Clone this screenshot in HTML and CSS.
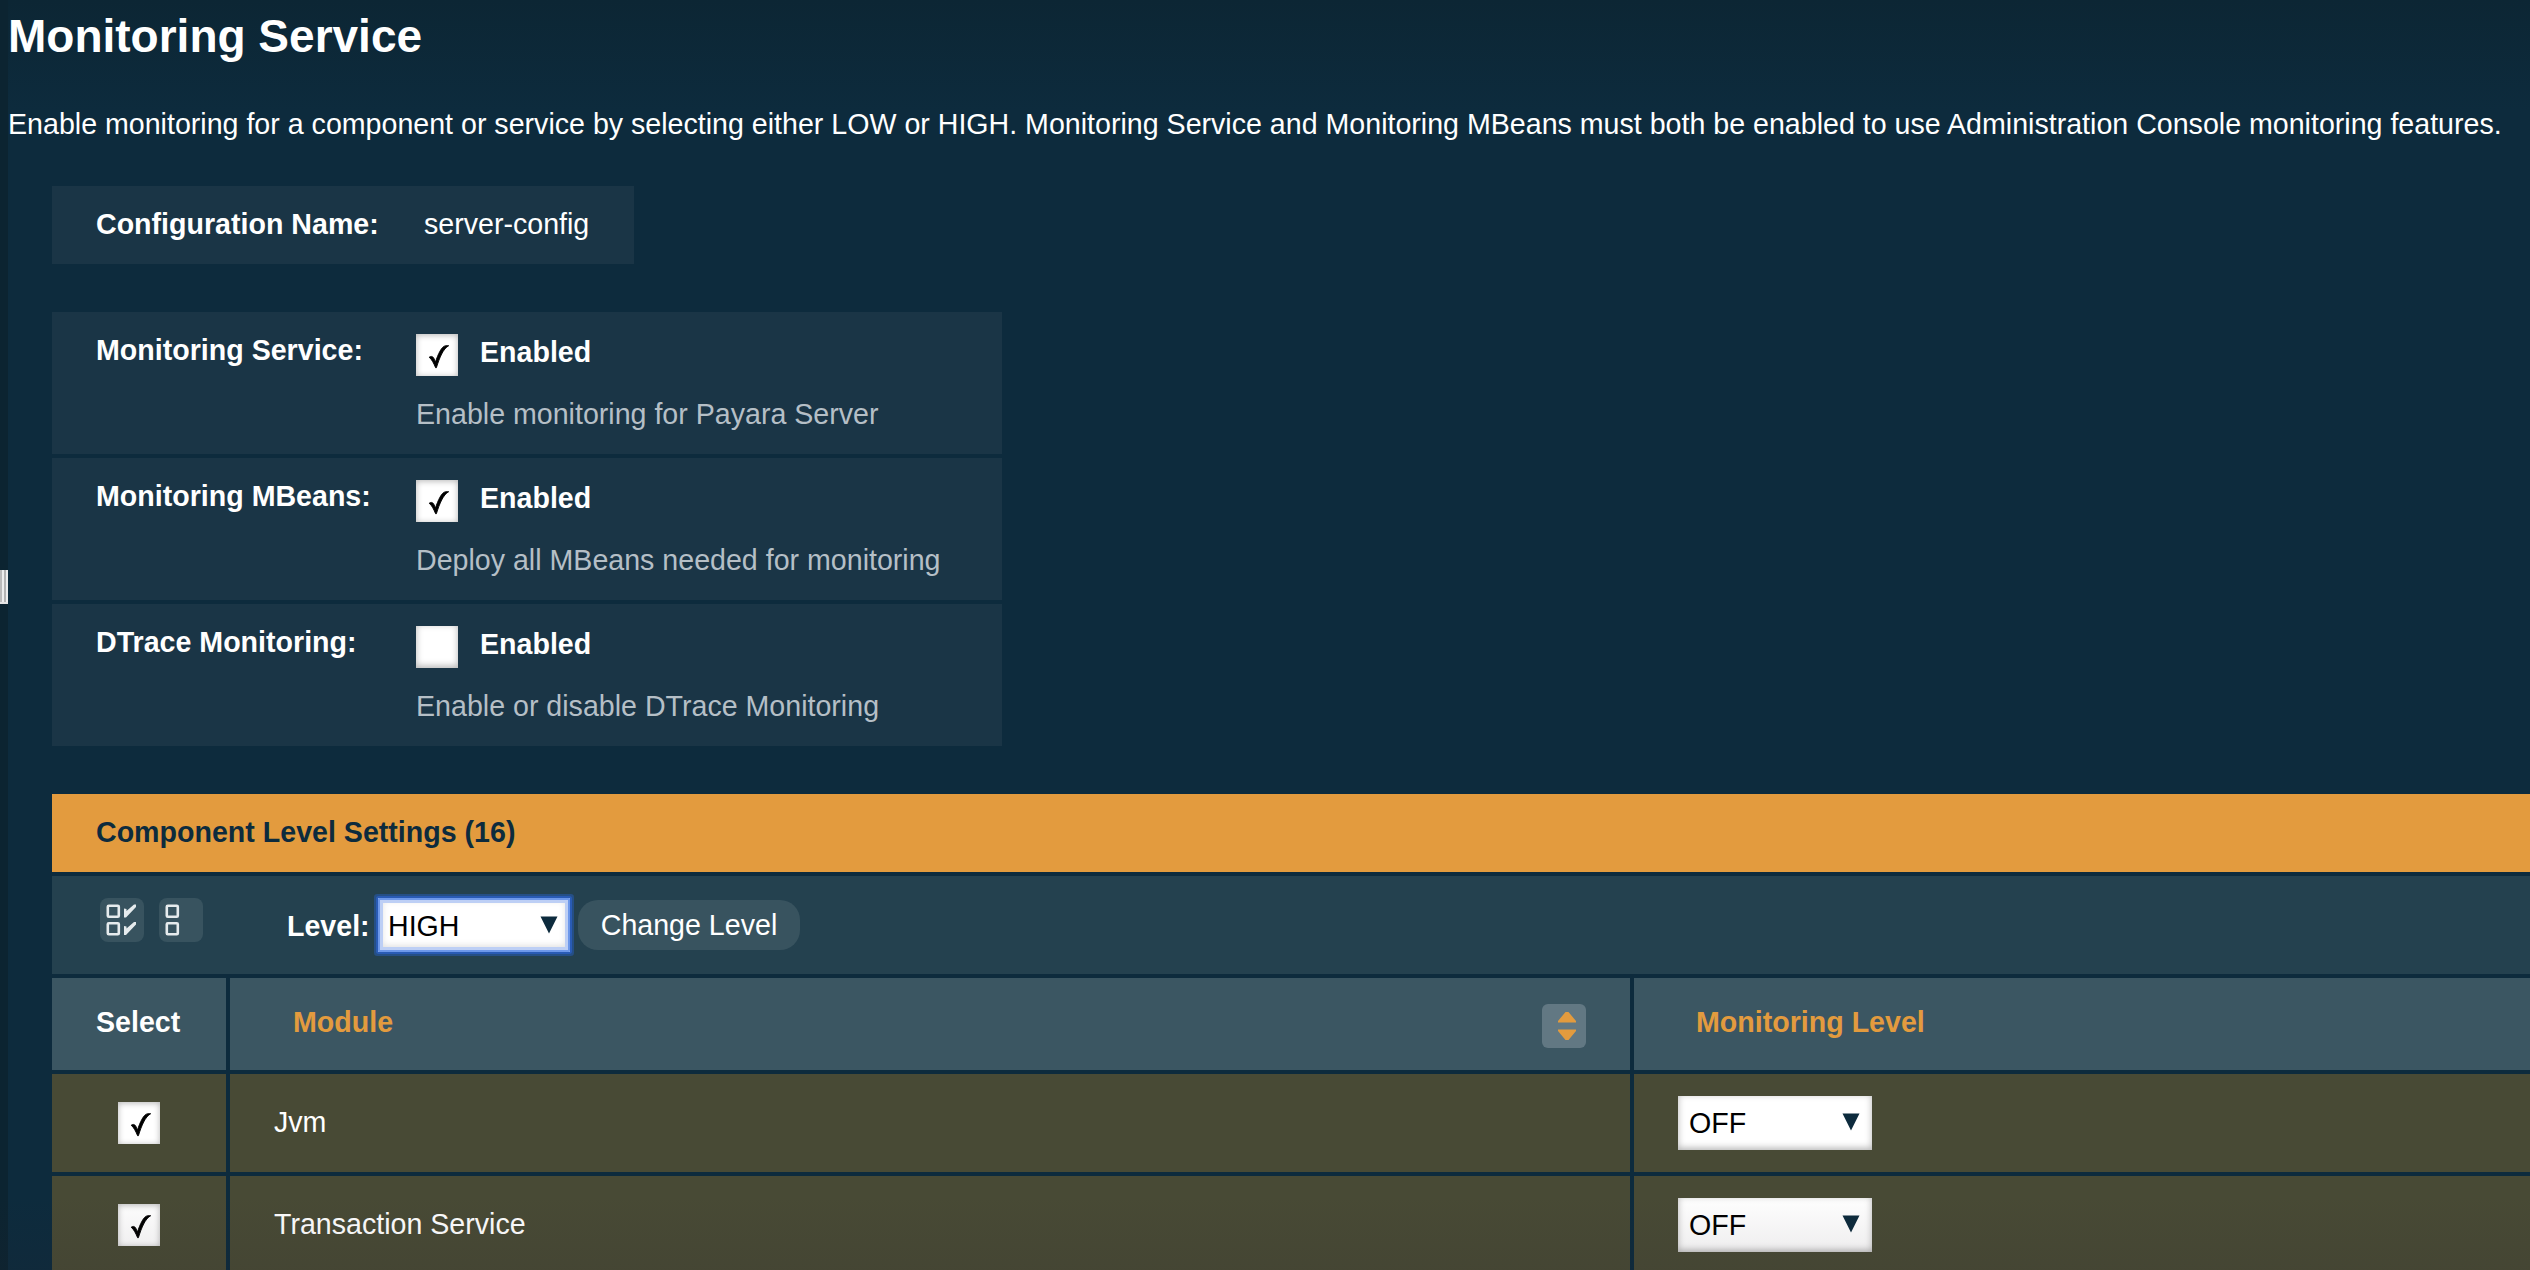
FILE: index.html
```html
<!DOCTYPE html>
<html lang="en">
<head>
<meta charset="utf-8">
<title>Monitoring Service</title>
<link rel="stylesheet" href="styles.css">
</head>
<body>
<svg class="defs" width="0" height="0">
  <symbol id="check" viewBox="0 0 42 42"><path stroke="#000" stroke-width="0.900" d="M13.200 23.200c2-1.500 4.200-1 5.400 2.800l.8 2.200C22 20.500 25.500 11.900 30 11.700h2.700c-5.600 3.200-9 11.500-12.300 22h-.8c-2-4.600-3.400-7.800-6.400-10.500z"/></symbol>
  <symbol id="arrow" viewBox="0 0 18 18"><path d="M.5 0.500h17l-8.500 17z"/></symbol>
</svg>
<div class="page">
  <div class="splitter"><div class="handle"></div></div>
  <main class="content">
    <h1 class="title">Monitoring Service</h1>
    <p class="intro">Enable monitoring for a component or service by selecting either LOW or HIGH. Monitoring Service and Monitoring MBeans must both be enabled to use Administration Console monitoring features.</p>

    <section class="config">
      <span class="config-label">Configuration Name:</span>
      <span>server-config</span>
    </section>

    <section class="properties">
      <div class="property">
        <span class="property-label">Monitoring Service:</span>
        <div>
          <div class="option"><span class="checkbox"><svg class="mark"><use href="#check"/></svg></span><span class="option-text">Enabled</span></div>
          <p class="help">Enable monitoring for Payara Server</p>
        </div>
      </div>
      <div class="property">
        <span class="property-label">Monitoring MBeans:</span>
        <div>
          <div class="option"><span class="checkbox"><svg class="mark"><use href="#check"/></svg></span><span class="option-text">Enabled</span></div>
          <p class="help">Deploy all MBeans needed for monitoring</p>
        </div>
      </div>
      <div class="property">
        <span class="property-label">DTrace Monitoring:</span>
        <div>
          <div class="option"><span class="checkbox checkbox-off"></span><span class="option-text">Enabled</span></div>
          <p class="help">Enable or disable DTrace Monitoring</p>
        </div>
      </div>
    </section>

    <section class="levels">
      <h2 class="levels-title">Component Level Settings (16)</h2>
      <div class="toolbar">
        <div class="icon-button">
          <svg class="glyph" viewBox="0 0 44 44"><g fill="none" stroke="#e6ebed" stroke-width="2.600"><rect x="7.800" y="7.800" width="11" height="11" rx="1"/><rect x="7.800" y="25.200" width="11" height="11" rx="1"/></g><path fill="#e6ebed" d="M24 10.500l2.500 0.500v2L34 6.500h2v2.500L26 19.500h-2zM24 28l2.500 0.500v2L34 24h2v2.500L26 37h-2z"/></svg>
        </div>
        <div class="icon-button">
          <svg class="glyph" viewBox="0 0 44 44"><g fill="none" stroke="#e6ebed" stroke-width="2.600"><rect x="7.800" y="7.800" width="11" height="11" rx="1"/><rect x="7.800" y="25.200" width="11" height="11" rx="1"/></g></svg>
        </div>
        <span class="level-label">Level:</span>
        <div class="select select-focus"><span>HIGH</span><svg class="arrow"><use href="#arrow"/></svg></div>
        <button class="button">Change Level</button>
      </div>
      <div class="row row-head">
        <div class="cell cell-select">Select</div>
        <div class="cell cell-module"><span>Module</span>
          <span class="sort"><svg class="glyph" viewBox="0 0 44 44"><path fill="#e39b3e" d="M23.500 8h3L34 17v1.500H16V17zM16 25.500h18V27l-7.500 9h-3L16 27z"/></svg></span>
        </div>
        <div class="cell cell-level">Monitoring Level</div>
      </div>
      <div class="row">
        <div class="cell cell-select"><span class="checkbox"><svg class="mark"><use href="#check"/></svg></span></div>
        <div class="cell cell-module">Jvm</div>
        <div class="cell cell-level"><div class="select"><span>OFF</span><svg class="arrow"><use href="#arrow"/></svg></div></div>
      </div>
      <div class="row">
        <div class="cell cell-select"><span class="checkbox"><svg class="mark"><use href="#check"/></svg></span></div>
        <div class="cell cell-module">Transaction Service</div>
        <div class="cell cell-level"><div class="select"><span>OFF</span><svg class="arrow"><use href="#arrow"/></svg></div></div>
      </div>
    </section>
  </main>
</div>
</body>
</html>
```
FILE: styles.css
```css
* {
  box-sizing: border-box;
}

body {
  margin: 0;
  overflow: hidden;
  background: #0d2b3d;
  color: #fff;
  font: 28.600px/32px "Liberation Sans", Arial, sans-serif;
}

h1, h2, p {
  margin: 0;
}

.defs {
  display: block;
}

.page {
  position: relative;
  display: flex;
  height: 1270px;
  overflow: hidden;
  background: linear-gradient(#0c2634, #0d2b3d 110px);
}

/* soft shade along the bottom edge */
.page::after {
  content: "";
  position: absolute;
  inset: auto 0 0;
  height: 75px;
  background: linear-gradient(transparent, rgba(40, 30, 40, 0.1));
  pointer-events: none;
}

.splitter {
  display: flex;
  align-items: center;
  flex: 0 0 8px;
  background: #0c2431;
  padding-bottom: 96px;
}

.handle {
  width: 8px;
  height: 34px;
  border-bottom: 2px solid #e4e4e4;
  background: linear-gradient(90deg, #bbb 2px, #eee 2px, #eee 4px, #b4b4b4 4px, #b4b4b4 6px, #eee 6px);
}

.content {
  flex: 1;
  min-width: 0;
}

.title {
  height: 108px;
  padding-top: 8px;
  font-size: 46px;
  line-height: 56px;
}

.intro {
  height: 78px;
  white-space: nowrap;
}

.config {
  display: flex;
  width: 582px;
  height: 78px;
  margin: 0 0 48px 44px;
  padding: 22px 44px;
  background: #1a3546;
}

.config-label {
  width: 328px;
  font-weight: bold;
}

.properties {
  display: grid;
  gap: 4px;
  width: 950px;
  margin: 0 0 48px 44px;
}

.property {
  display: flex;
  height: 142px;
  padding: 22px 0 0 44px;
  background: #1a3546;
}

.property-label {
  width: 320px;
  font-weight: bold;
}

.option {
  display: flex;
  gap: 22px;
}

.option-text {
  padding-top: 2px;
  font-weight: bold;
}

.help {
  margin-top: 22px;
  color: #b5bfc6;
}

.checkbox {
  flex: none;
  width: 42px;
  height: 42px;
  background: #fff;
  box-shadow: inset 0 1px 6px rgba(0, 0, 0, 0.3);
}

.checkbox-off {
  box-shadow: inset 0 -2px 7px rgba(0, 0, 0, 0.3);
}

.mark {
  display: block;
  width: 42px;
  height: 42px;
}

.levels {
  display: grid;
  gap: 4px;
  margin-left: 44px;
}

.levels-title {
  height: 78px;
  padding: 22px 44px;
  background: #e39b3e;
  color: #0d2b3d;
  font-size: inherit;
}

.toolbar {
  display: flex;
  height: 98px;
  padding: 22px 0 0 48px;
  background: #24414f;
}

.icon-button {
  width: 44px;
  height: 44px;
  margin-right: 15px;
  border-radius: 8px;
  background: #38535f;
}

.glyph {
  display: block;
  width: 44px;
  height: 44px;
}

.level-label {
  width: 91px;
  margin-left: 69px;
  padding-top: 12px;
  font-weight: bold;
}

.select {
  display: flex;
  justify-content: space-between;
  width: 194px;
  height: 54px;
  padding: 11px 12px 0 11px;
  background: #fff;
  box-shadow: inset 0 -2px 7px rgba(0, 0, 0, 0.3);
  color: #000;
}

.select-focus {
  width: 192px;
  padding: 12px 12px 0 10px;
  box-shadow: inset 0 0 0 2px #6d98ea, inset 0 0 0 5px #bdcff5, inset 0 -2px 7px 4px rgba(0, 0, 0, 0.14), 0 0 0 2px #295bb5, 0 0 0 4px #254f86;
  border-radius: 1px;
}

.arrow {
  width: 18px;
  height: 18px;
  margin-top: 6px;
  fill: #0d2b3d;
}

.button {
  width: 222px;
  height: 50px;
  margin: 2px 0 0 8px;
  padding: 0;
  border: 0;
  border-radius: 20px;
  background: #38535f;
  color: #fff;
  font: inherit;
}

.row {
  display: grid;
  grid-template-columns: 174px 1400px 1fr;
  gap: 4px;
  height: 98px;
}

.cell {
  padding: 22px 44px 0;
  background: #484a35;
}

.cell-select {
  padding: 28px 0 0 66px;
}

.cell .checkbox {
  display: block;
}

.cell-module {
  display: flex;
  justify-content: space-between;
  padding-top: 32px;
}

.row-head {
  height: 92px;
  font-weight: bold;
}

.row-head .cell {
  padding: 28px 44px 0;
  background: #3b5662;
}

.row-head .cell-module {
  padding-left: 63px;
  color: #e39b3e;
}

.row-head .cell-level {
  padding-left: 62px;
  color: #e39b3e;
}

.sort {
  width: 44px;
  height: 44px;
  margin-top: -2px;
  border-radius: 6px;
  background: #627883;
}
```
